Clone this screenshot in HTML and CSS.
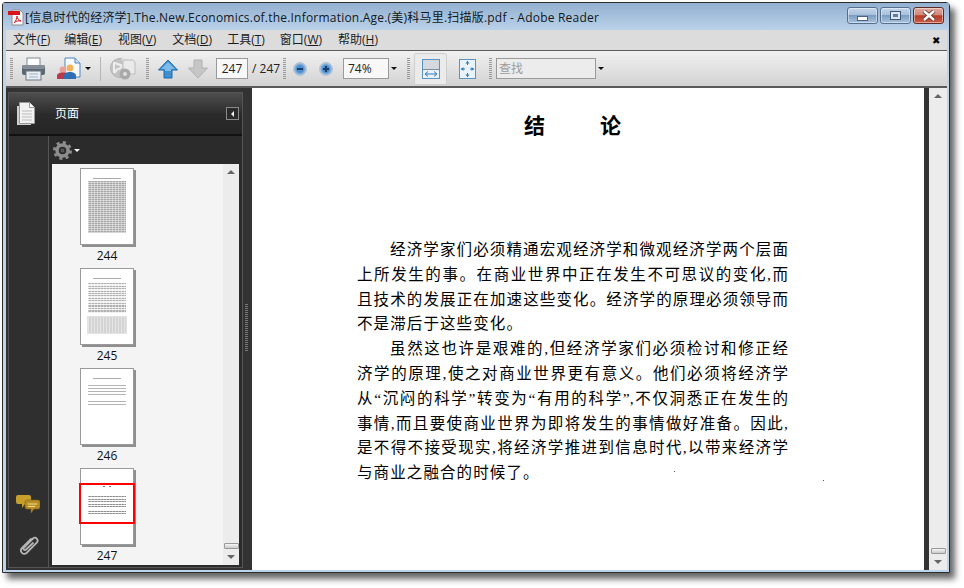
FILE: index.html
```html
<!DOCTYPE html>
<html lang="zh">
<head>
<meta charset="utf-8">
<title>Adobe Reader</title>
<link rel="stylesheet" href="styles.css">
</head>
<body>
<div class="window">
  <header class="titlebar">
    <svg class="pdficon" width="17" height="17" viewBox="0 0 17 17"><path d="M4 1h8l3 3v12H4z" fill="#fff" stroke="#8a8a8a"/><rect x="0" y="2" width="12" height="4" fill="#d8141a"/><path d="M6 14c2-2 3-5 3-7 0 3 2 4 4 5-3-.5-5 0-7 2z" fill="none" stroke="#d8141a"/></svg>
    <span class="title">[信息时代的经济学].The.New.Economics.of.the.Information.Age.(美)科马里.扫描版.pdf - Adobe Reader</span>
    <div class="winbtns">
      <div class="winbtn"><span class="glyph-min"></span></div>
      <div class="winbtn"><span class="glyph-max"></span></div>
      <div class="winbtn closebtn"><svg width="14" height="11" viewBox="0 0 14 11"><path d="M2 1l10 9M12 1L2 10" stroke="#5c2a22" stroke-width="4"/><path d="M2 1l10 9M12 1L2 10" stroke="#fff" stroke-width="2.4"/></svg></div>
    </div>
  </header>
  <nav class="menubar">
    <span class="menu m1">文件(<u>F</u>)</span>
    <span class="menu m2">编辑(<u>E</u>)</span>
    <span class="menu m3">视图(<u>V</u>)</span>
    <span class="menu m4">文档(<u>D</u>)</span>
    <span class="menu m5">工具(<u>T</u>)</span>
    <span class="menu m6">窗口(<u>W</u>)</span>
    <span class="menu m7">帮助(<u>H</u>)</span>
    <span class="menuclose">✖</span>
  </nav>
  <div class="toolbar">
    <span class="grip g1"></span>
    <svg class="ti printer" width="25" height="24" viewBox="0 0 25 24"><rect x="6" y="1" width="13" height="8" fill="#fff" stroke="#7d8a96"/><rect x="1" y="8" width="23" height="10" rx="2" fill="#5d6772"/><rect x="1" y="8" width="23" height="4" rx="2" fill="#858f99"/><rect x="5" y="14" width="15" height="9" fill="#e9eef3" stroke="#6a7784"/><path d="M8 17h9M8 20h9" stroke="#9fb3c6"/></svg>
    <svg class="ti share" width="24" height="23" viewBox="0 0 24 23"><path d="M8 1h10l5 5v14H8z" fill="#f6f9fd" stroke="#4f86c0"/><path d="M18 1v5h5" fill="#cfe0f2" stroke="#4f86c0"/><circle cx="6" cy="13" r="3.4" fill="#e8a09a"/><path d="M0 22v-3c0-3 3-3.600 6-3.600s6 .6 6 3.600v3z" fill="#b83a4a"/><circle cx="13" cy="11" r="3.400" fill="#f0b35c"/><path d="M7 22v-3c0-3 3-4 6-4s6 1 6 4v3z" fill="#2f6fb5"/></svg>
    <span class="caret c1"></span>
    <span class="vsep"></span>
    <svg class="ti web" width="26" height="24" viewBox="0 0 26 24"><circle cx="10" cy="11" r="9.500" fill="#c4c4c4" stroke="#b0b0b0"/><path d="M4 6c3 0 4 2 7 2 2 1-1 4-3 4s-2 4-4 3zM12 2c2 1 4 2 6 5" fill="none" stroke="#eee" stroke-width="2"/><path d="M13 3h10l2 2v12H13z" fill="#eaeaea" stroke="#bcbcbc"/><circle cx="15" cy="17" r="5.500" fill="#a9a9a9"/><circle cx="15" cy="17" r="2" fill="#e0e0e0"/></svg>
    <span class="grip g2"></span>
    <svg class="ti up" width="20" height="20" viewBox="0 0 20 20"><path d="M10 1l9.500 10H14v8H6v-8H.5z" fill="#3f8ed1" stroke="#1c6aa8"/><path d="M10 3L3 10h4v2h6v-2h4z" fill="#7ebbe8"/></svg>
    <svg class="ti down" width="20" height="20" viewBox="0 0 20 20"><path d="M10 19L.5 9H6V1h8v8h5.500z" fill="#c6c6c6" stroke="#b0b0b0"/></svg>
    <span class="field pagefield">247</span>
    <span class="pagetotal">/ 247</span>
    <span class="grip g3"></span>
    <span class="zoombtn zb1"><span class="zminus"></span></span>
    <span class="zoombtn zb2"><span class="zminus"></span><span class="zplus"></span></span>
    <span class="field zoomfield">74%</span>
    <span class="caret c2"></span>
    <span class="grip g4"></span>
    <span class="fitbtn">
      <svg width="18" height="20" viewBox="0 0 18 20"><rect x=".5" y=".5" width="17" height="19" fill="#eaf3fb" stroke="#5b93c4"/><rect x="1" y="1" width="16" height="9" fill="#d3d9df"/><rect x="1" y="10" width="16" height="1" fill="#7d8f9f"/><path d="M3 15h12M3 15l3-2.500M3 15l3 2.500M15 15l-3-2.500M15 15l-3 2.500" stroke="#2f7ab8" fill="none"/></svg>
    </span>
    <svg class="ti fitpage" width="17" height="20" viewBox="0 0 17 20"><rect x=".5" y=".5" width="16" height="19" fill="#eaf3fb" stroke="#5b93c4"/><path d="M8.500 2v4M8.500 14v4M2 10h4M11 10h4" stroke="#2f7ab8"/><path d="M8.500 2l-2 2.500h4zM8.500 18l-2-2.500h4zM2 10l2.500-2v4zM15 10l-2.500-2v4z" fill="#2f7ab8"/></svg>
    <span class="grip g5"></span>
    <span class="field findfield">查找</span>
    <span class="caret c3"></span>
  </div>
  <main class="content">
    <aside class="sidebar">
      <div class="panel">
        <div class="panelhead">
          <svg class="pagesicon" width="19" height="23" viewBox="0 0 19 23"><path d="M1 4h3v18h11v1H1z" fill="#cfcfcf"/><path d="M3.500.5h10l5 5v16h-15z" fill="#f2f2f2" stroke="#999"/><path d="M13.500.5v5h5" fill="#fff" stroke="#999"/><path d="M6 9h10M6 12h10M6 15h10M6 18h10" stroke="#bbb"/></svg>
          <span class="paneltitle">页面</span>
          <span class="collapse"><span class="leftarrow"></span></span>
        </div>
        <div class="panelbody">
          <div class="rail">
            <svg class="comments" width="24" height="20" viewBox="0 0 24 20"><path d="M2 1h11a2 2 0 0 1 2 2v5a2 2 0 0 1-2 2H9l-3 4v-4H2a2 2 0 0 1-2-2V3a2 2 0 0 1 2-2z" fill="#c7a02c"/><path d="M11 6h11a2 2 0 0 1 2 2v5a2 2 0 0 1-2 2h-4l-3 4v-4h-4a2 2 0 0 1-2-2V8a2 2 0 0 1 2-2z" fill="#b98e24" stroke="#7d6116" stroke-width=".6"/><path d="M12 10h9M12 12.500h7" stroke="#f1dc8a"/></svg>
            <svg class="clip" width="22" height="23" viewBox="0 0 22 23"><path d="M13 5L4 14c-3 3 1 8 4.500 5L19 8.500c2-2.500-1.500-6.500-4-4L6 13.500c-1.500 1.500.5 3.500 2 2L15 9" fill="none" stroke="#b5b5b5" stroke-width="1.800" stroke-linecap="round"/></svg>
          </div>
          <div class="pagespane">
            <div class="optionsbar">
              <svg width="19" height="19" viewBox="0 0 19 19"><circle cx="9.500" cy="9.500" r="5.500" fill="none" stroke="#8d8d8d" stroke-width="3.500"/><circle cx="9.500" cy="9.500" r="8" fill="none" stroke="#8d8d8d" stroke-width="3" stroke-dasharray="3 3.300"/><circle cx="9.500" cy="9.500" r="2" fill="#555"/></svg>
              <span class="caret whitecaret"></span>
            </div>
            <div class="thumbs">
              <div class="thumblist">
                <div class="cell">
                  <div class="thumb t244"><i class="ink head"></i><i class="ink dense"></i></div>
                  <span class="num">244</span>
                </div>
                <div class="cell">
                  <div class="thumb t245"><i class="ink head"></i><i class="ink mid"></i><i class="ink boxed"></i></div>
                  <span class="num">245</span>
                </div>
                <div class="cell">
                  <div class="thumb t246"><i class="ink head"></i><i class="ink short"></i><i class="ink short2"></i></div>
                  <span class="num">246</span>
                </div>
                <div class="cell">
                  <div class="thumb t247"><i class="ink dots"></i><i class="ink final"></i><span class="viewrect"></span></div>
                  <span class="num">247</span>
                </div>
              </div>
              <div class="scrollbar thin">
                <span class="arrowup"></span><span class="spacer"></span><span class="sthumb"></span><span class="arrowdown"></span>
              </div>
            </div>
          </div>
        </div>
      </div>
      <div class="splitter"><span class="splitgrip"></span></div>
    </aside>
    <section class="doc">
      <article class="page">
        <h1 class="heading"><span>结</span><span>论</span></h1>
        <div class="para">
          <p class="line first">经济学家们必须精通宏观经济学和微观经济学两个层面</p>
          <p class="line">上所发生的事。在商业世界中正在发生不可思议的变化,而</p>
          <p class="line">且技术的发展正在加速这些变化。经济学的原理必须领导而</p>
          <p class="line end">不是滞后于这些变化。</p>
          <p class="line first">虽然这也许是艰难的,但经济学家们必须检讨和修正经</p>
          <p class="line">济学的原理,使之对商业世界更有意义。他们必须将经济学</p>
          <p class="line">从“沉闷的科学”转变为“有用的科学”,不仅洞悉正在发生的</p>
          <p class="line">事情,而且要使商业世界为即将发生的事情做好准备。因此,</p>
          <p class="line">是不得不接受现实,将经济学推进到信息时代,以带来经济学</p>
          <p class="line end">与商业之融合的时候了。</p>
        </div>
        <span class="speck s1"></span><span class="speck s2"></span>
      </article>
      <div class="gutter"></div>
      <div class="scrollbar wide">
        <span class="arrowup"></span><span class="spacer"></span><span class="sthumb"></span><span class="arrowdown"></span>
      </div>
    </section>
  </main>
</div>
</body>
</html>
```
FILE: styles.css
```css
* { box-sizing: border-box; }
html, body { margin: 0; padding: 0; background: #fff; }
body { width: 964px; height: 588px; overflow: hidden; padding: 2px 0 0 2px; font-family: "Open Sans", "Noto Sans CJK SC", sans-serif; }
.window {
  width: 948px; height: 571px;
  border: 1px solid #2c2c2c; border-radius: 3px 4px 0 0;
  box-shadow: 5px 6px 6px rgba(0,0,0,.6);
  background: #bcd4ec;
  padding: 0 2px 2px 3px;
  display: flex; flex-direction: column;
}
.titlebar {
  height: 27px; margin: 0 -2px 0 -3px; padding: 0 5px 0 5px;
  background: linear-gradient(#93b0cf, #bad2ea);
  display: flex; align-items: center; flex: none;
}
.pdficon { margin: 1px 0 0 0; flex: none; }
.title { font-size: 12px; color: #101820; letter-spacing: .21px; white-space: nowrap; margin-top: 1px; }
.winbtns { margin-left: auto; display: flex; gap: 2px; margin-top: -2px; }
.winbtn {
  width: 31px; height: 17px; border: 1px solid #54708e; border-radius: 3px;
  background: linear-gradient(#c3d6ea 0, #a9c1dc 45%, #7e9dbf 50%, #a8c3df 100%);
  box-shadow: inset 0 0 0 1px rgba(255,255,255,.45);
  display: flex; align-items: center; justify-content: center;
}
.closebtn { background: linear-gradient(#e0a89c 0, #d08a7c 45%, #b33c28 52%, #c9604a 100%); border-color: #5e2a22; }
.glyph-min { width: 11px; height: 5px; background: #fff; border: 1px solid #4b6583; margin-top: 5px; }
.glyph-max { width: 11px; height: 9px; background: #dbe6f2; border: 1px solid #3f5875; box-shadow: inset 0 0 0 2px #dbe6f2, inset 0 0 0 5px #5d7ea3; }

.menubar { height: 20px; background: #dcdcdc; flex: none; display: flex; align-items: center; font-size: 12px; color: #1c1c1c; position: relative; padding-bottom: 1px; line-height: 16px; }
.menu { white-space: nowrap; }
.menu u { text-decoration: underline; }
.m1 { margin-left: 7px; }
.m2 { margin-left: 14px; }
.m3 { margin-left: 16px; }
.m4 { margin-left: 16px; }
.m5 { margin-left: 15px; }
.m6 { margin-left: 15px; }
.m7 { margin-left: 16px; }
.menuclose { margin-left: auto; margin-right: 7px; font-size: 10px; color: #000; }

.toolbar {
  height: 38px; flex: none;
  border-top: 1px solid #5c5c5c; border-bottom: 2px solid #5a5a5a;
  background: linear-gradient(#f1f1f1, #d3d3d3);
  display: flex; align-items: center;
}
.ti { flex: none; }
.grip { width: 3px; height: 22px; flex: none; background: repeating-linear-gradient(#9a9a9a 0 1px, transparent 1px 2px); }
.g1 { margin-left: 4px; }
.printer { margin-left: 8px; }
.share { margin-left: 11px; }
.caret { width: 0; height: 0; flex: none; border: 3px solid transparent; border-top: 3px solid #111; border-bottom: 0; }
.c1 { margin-left: 4px; }
.vsep { width: 1px; height: 24px; background: #b5b5b5; margin-left: 9px; flex: none; }
.web { margin-left: 9px; }
.g2 { margin-left: 10px; }
.up { margin-left: 9px; }
.down { margin-left: 10px; }
.field { height: 21px; background: #fff; border: 1px solid #9a9a9a; font-size: 12px; line-height: 19px; color: #222; flex: none; padding-left: 4px; }
.pagefield { width: 32px; margin-left: 8px; background: #f8f8f8; text-align: center; padding: 0; }
.pagetotal { font-size: 12px; color: #222; margin-left: 4px; width: 26px; flex: none; white-space: nowrap; }
.g3 { margin-left: 5px; }
.zoombtn { width: 14px; height: 14px; border-radius: 50%; flex: none; position: relative; background: radial-gradient(circle, #4f8fd0 0 40%, #9bbcdc 65%, #e3eaf1 100%); border: 1px solid #b4c2d0; }
.zb1 { margin-left: 7px; }
.zb2 { margin-left: 12px; }
.zminus { position: absolute; left: 3px; top: 5px; width: 6px; height: 2px; background: #173f6e; }
.zplus { position: absolute; left: 5px; top: 3px; width: 2px; height: 6px; background: #173f6e; }
.zoomfield { width: 46px; margin-left: 10px; background: #f8f8f8; }
.c2 { margin-left: 2px; }
.g4 { margin-left: 10px; }
.fitbtn { width: 33px; height: 32px; flex: none; margin-left: 4px; background: #ebebeb; border: 1px solid #cfcfcf; border-radius: 2px; display: flex; align-items: center; justify-content: center; }
.fitpage { margin-left: 12px; }
.g5 { margin-left: 13px; }
.findfield { width: 100px; margin-left: 4px; background: #ececec; color: #9c9c9c; padding-left: 2px; }
.c3 { margin-left: 2px; }

.content { flex: 1; display: flex; min-height: 0; }
.sidebar { width: 246px; flex: none; background: #333; display: flex; padding: 4px 0 2px 2px; }
.panel { width: 235px; flex: none; display: flex; flex-direction: column; border: 1px solid #555; }
.panelhead { height: 43px; flex: none; display: flex; align-items: center; background: linear-gradient(#4d4d4d, #2a2a2a 55%, #262626); border-bottom: 2px solid #111; padding-left: 7px; }
.pagesicon { flex: none; }
.paneltitle { color: #fff; font-size: 12px; margin-left: 20px; margin-top: -2px; }
.collapse { width: 13px; height: 13px; margin-left: auto; margin-right: 3px; border: 1px solid #8a8a8a; background: #2a2a2a; display: flex; align-items: center; justify-content: center; }
.leftarrow { width: 0; height: 0; border: 3px solid transparent; border-right: 3px solid #eee; border-left: 0; }
.panelbody { flex: 1; display: flex; min-height: 0; }
.rail { width: 39px; flex: none; background: #2f2f2f; display: flex; flex-direction: column; align-items: center; justify-content: flex-end; padding-bottom: 10px; gap: 20px; }
.comments { margin-right: 1px; }
.pagespane { flex: 1; min-width: 0; border-left: 1px solid #555; background: #2b2b2b; display: flex; flex-direction: column; padding: 0 3px 2px 3px; }
.optionsbar { height: 28px; flex: none; display: flex; align-items: center; gap: 2px; padding-left: 1px; }
.whitecaret { border-top-color: #fff; }
.thumbs { flex: 1; min-height: 0; background: #f4f4f4; display: flex; overflow: hidden; }
.thumblist { width: 171px; flex: none; padding: 4px 0 0 28px; }
.cell { height: 100px; width: 54px; display: flex; flex-direction: column; align-items: center; }
.thumb { width: 54px; height: 77px; flex: none; background: #fff; border: 1px solid #9a9a9a; box-shadow: 2px 2px 0 #8f8f8f; position: relative; padding: 8px 7px 0; display: flex; flex-direction: column; }
.num { font-size: 12px; line-height: 16px; margin-top: 3px; color: #111; }
.ink { display: block; flex: none; }
.head { height: 1px; margin: 1px 5px 2px; background: #aaa; }
.dense {
  height: 52px;
  background:
    repeating-linear-gradient(90deg, rgba(255,255,255,.35) 0 1px, transparent 1px 3px),
    repeating-linear-gradient(#a6a6a6 0 1px, #d2d2d2 1px 2px);
}
.mid { height: 30px; margin-top: 2px; background: repeating-linear-gradient(90deg, rgba(255,255,255,.4) 0 1px, transparent 1px 3px), repeating-linear-gradient(#b0b0b0 0 1px, #f2f2f2 1px 2.500px); }
.boxed { height: 16px; margin-top: 4px; background: repeating-linear-gradient(90deg, rgba(255,255,255,.4) 0 1px, transparent 1px 3px), #d4d4d4; box-shadow: 0 0 0 1px #e2e2e2; }
.short { height: 12px; margin-top: 4px; background: repeating-linear-gradient(#b4b4b4 0 1px, #fff 1px 3px); }
.short2 { height: 6px; margin-top: 4px; background: repeating-linear-gradient(#b4b4b4 0 1px, #fff 1px 3px); }
.dots { height: 1px; margin: 9px 15px 0; background: linear-gradient(90deg, #777 0 2px, transparent 2px 6px, #777 6px 8px, transparent 8px); }
.final { height: 20px; margin-top: 9px; background: repeating-linear-gradient(90deg, rgba(255,255,255,.4) 0 1px, transparent 1px 3px), repeating-linear-gradient(#8e8e8e 0 1px, #fff 1px 2.500px); }
.viewrect { position: absolute; left: -2px; top: 14px; width: 56px; height: 41px; border: 2px solid #f00; }
.scrollbar { background: #ececec; display: flex; flex-direction: column; align-items: center; flex: none; }
.thin { width: 16px; padding: 6px 0 6px; }
.wide { width: 18px; padding: 6px 0 6px; }
.spacer { flex: 1; }
.arrowup { width: 0; height: 0; border: 4px solid transparent; border-bottom: 4px solid #666; border-top: 0; }
.arrowdown { width: 0; height: 0; border: 4px solid transparent; border-top: 4px solid #666; border-bottom: 0; margin-top: 6px; }
.sthumb { width: 15px; height: 6px; border: 1px solid #999; border-radius: 1px; background: linear-gradient(#f7f7f7, #c9c9c9); }
.splitter { flex: 1; display: flex; align-items: center; padding-left: 2px; }
.splitgrip { width: 3px; height: 48px; background: repeating-linear-gradient(#777 0 1px, transparent 1px 2px); margin-top: -5px; }

.doc { flex: 1; min-width: 0; display: flex; }
.page { width: 672px; flex: none; background: #fff; position: relative; padding: 26px 0 0 105px; font-family: "Liberation Serif", "Noto Sans CJK SC", serif; color: #000; }
.heading { margin: 0 0 0 167px; width: 97px; display: flex; justify-content: space-between; font-size: 21px; line-height: 24px; font-weight: 700; }
.para { width: 431px; margin-top: 100px; }
.line { margin: 0; height: 24.8px; line-height: 24.8px; font-size: 15.500px; text-align: justify; text-align-last: justify; white-space: nowrap; }
.first { padding-left: 33px; }
.end { text-align-last: left; letter-spacing: 1.100px; }
.speck { position: absolute; width: 1px; height: 1px; background: #555; }
.s1 { left: 422px; top: 383px; }
.s2 { left: 571px; top: 392px; }
.gutter { width: 5px; flex: none; background: #333; }
```
